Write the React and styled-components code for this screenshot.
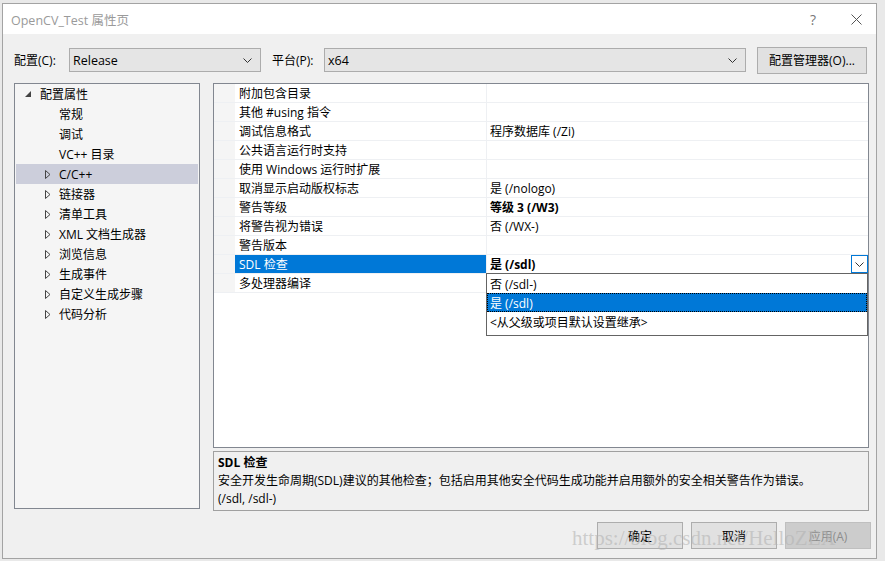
import styled, { createGlobalStyle } from 'styled-components'

const Global = createGlobalStyle`
  html, body {
    margin: 0;
    background: #e9e9e9;
  }
  body {
    font-family: "Segoe UI", "Open Sans", "Noto Sans CJK SC", sans-serif;
    font-size: 12px;
    color: #000;
  }
`

const Page = styled.div`
  height: 561px;
  padding: 3px 0 0 2px;
  box-sizing: border-box;
  overflow: hidden;
`
const Dialog = styled.div`
  position: relative;
  width: 875px;
  height: 556px;
  box-sizing: border-box;
  border: 1px solid #a3a3a3;
  background: #f0f0f0;
  display: flex;
  flex-direction: column;
`
const TitleBar = styled.div`
  height: 30px;
  flex-shrink: 0;
  background: #fff;
  display: flex;
  align-items: center;
  padding-left: 8px;
`
const Title = styled.span`
  color: #9a9a9a;
  font-size: 12.5px;
`
const Controls = styled.div`
  margin-left: auto;
  display: flex;
  align-items: center;
  gap: 35px;
  padding-right: 14px;
  color: #777;
  font-size: 14px;
`
const Body = styled.div`
  padding: 13px 7px 0 11px;
  display: flex;
  flex-direction: column;
`
const ConfigRow = styled.div`
  height: 26px;
  display: flex;
  align-items: center;
`
const Label = styled.span`
  width: ${p => p.$w}px;
  flex-shrink: 0;
`
const Select = styled.div`
  width: ${p => p.$w}px;
  height: 24px;
  box-sizing: border-box;
  border: 1px solid #acacac;
  background: #e5e5e5;
  display: flex;
  align-items: center;
  padding: 0 8px 0 3px;
  margin-right: 11px;
  span { flex: 1; font-size: 12.5px; }
`
const Button = styled.button`
  width: ${p => p.$w || 86}px;
  height: 27px;
  box-sizing: border-box;
  border: 1px solid ${p => (p.disabled ? '#bfbfbf' : '#adadad')};
  background: ${p => (p.disabled ? '#cccccc' : '#e1e1e1')};
  color: ${p => (p.disabled ? '#8d8d8d' : '#000')};
  font-family: inherit;
  font-size: 12px;
  padding: 0;
`
const Main = styled.div`
  margin-top: 10px;
  height: 426px;
  display: flex;
  gap: 13px;
`
const Tree = styled.div`
  width: 186px;
  box-sizing: border-box;
  border: 1px solid #828790;
  background: #f5f5f5;
  padding: 0 1px;
`
const TreeRow = styled.div`
  height: 20px;
  display: flex;
  align-items: center;
  padding-left: ${p => (p.$level ? 29 : 9)}px;
  background: ${p => (p.$selected ? '#cccedb' : 'transparent')};
`
const Arrow = styled.span`
  width: ${p => (p.$level ? 14 : 15)}px;
  flex-shrink: 0;
  display: flex;
  align-items: center;
`
const Right = styled.div`
  flex: 1;
  display: flex;
  flex-direction: column;
  gap: 3px;
`
const Grid = styled.div`
  height: 365px;
  flex-shrink: 0;
  box-sizing: border-box;
  border: 1px solid #828790;
  background: #fff;
`
const Row = styled.div`
  height: 19px;
  box-sizing: border-box;
  display: grid;
  grid-template-columns: 21px 252px 1fr;
  border-bottom: 1px solid #eef0f3;
`
const Gutter = styled.div`
  background: #f5f5f5;
`
const NameCell = styled.div`
  display: flex;
  align-items: center;
  padding-left: 4px;
  border-right: 1px solid #eef0f3;
  background: ${p => (p.$selected ? '#0078d7' : 'transparent')};
  color: ${p => (p.$selected ? '#fff' : '#000')};
`
const ValueCell = styled.div`
  position: relative;
  display: flex;
  align-items: center;
  padding-left: 3px;
  font-weight: ${p => (p.$bold ? 700 : 400)};
`
const DropButton = styled.div`
  margin-left: auto;
  width: 17px;
  height: 18px;
  box-sizing: border-box;
  border: 1px solid #0078d7;
  background: #fff;
  display: flex;
  align-items: center;
  justify-content: center;
`
const Dropdown = styled.div`
  position: absolute;
  top: 18px;
  left: -1px;
  right: 0;
  height: 63px;
  box-sizing: border-box;
  border: 1px solid #646464;
  background: #fff;
  z-index: 2;
  font-weight: 400;
`
const Option = styled.div`
  height: 19px;
  display: flex;
  align-items: center;
  padding-left: 3px;
  background: ${p => (p.$active ? '#0078d7' : 'transparent')};
  color: ${p => (p.$active ? '#fff' : '#000')};
  outline: ${p => (p.$active ? '1px dotted #000' : 'none')};
  outline-offset: -1px;
`
const Desc = styled.div`
  flex: 1;
  box-sizing: border-box;
  border: 1px solid #a0a0a0;
  background: #f0f0f0;
  padding: 2px 4px;
  line-height: 18px;
`
const DescTitle = styled.div`
  font-weight: 700;
`
const Footer = styled.div`
  display: flex;
  justify-content: flex-end;
  gap: 8px;
  padding: 13px 5px 0 0;
`
const Watermark = styled.div`
  position: absolute;
  left: 569px;
  top: 522px;
  font-family: "Liberation Serif", serif;
  font-size: 21px;
  color: rgba(180, 180, 180, 0.6);
  pointer-events: none;
  white-space: nowrap;
`

const Chevron = () => (
  <svg width="9" height="5" viewBox="0 0 9 5">
    <polyline points="0.5,0.5 4.5,4.5 8.5,0.5" fill="none" stroke="#333" strokeWidth="1" />
  </svg>
)

const treeItems = [
  { text: '配置属性', level: 0, open: true },
  { text: '常规', level: 1 },
  { text: '调试', level: 1 },
  { text: 'VC++ 目录', level: 1 },
  { text: 'C/C++', level: 1, arrow: true, selected: true },
  { text: '链接器', level: 1, arrow: true },
  { text: '清单工具', level: 1, arrow: true },
  { text: 'XML 文档生成器', level: 1, arrow: true },
  { text: '浏览信息', level: 1, arrow: true },
  { text: '生成事件', level: 1, arrow: true },
  { text: '自定义生成步骤', level: 1, arrow: true },
  { text: '代码分析', level: 1, arrow: true },
]

const props = [
  ['附加包含目录', ''],
  ['其他 #using 指令', ''],
  ['调试信息格式', '程序数据库 (/Zi)'],
  ['公共语言运行时支持', ''],
  ['使用 Windows 运行时扩展', ''],
  ['取消显示启动版权标志', '是 (/nologo)'],
  ['警告等级', '等级 3 (/W3)', true],
  ['将警告视为错误', '否 (/WX-)'],
  ['警告版本', ''],
  ['SDL 检查', '是 (/sdl)', true, true],
  ['多处理器编译', ''],
]

export default function App() {
  return (
    <Page>
      <Global />
      <Dialog>
        <TitleBar>
          <Title>OpenCV_Test 属性页</Title>
          <Controls>
            <span>?</span>
            <svg width="11" height="11" viewBox="0 0 11 11">
              <path d="M0.5 0.5 L10.5 10.5 M10.5 0.5 L0.5 10.5" stroke="#555" strokeWidth="1" />
            </svg>
          </Controls>
        </TitleBar>
        <Body>
          <ConfigRow>
            <Label $w={55}>配置(C):</Label>
            <Select $w={192}><span>Release</span><Chevron /></Select>
            <Label $w={52}>平台(P):</Label>
            <Select $w={422}><span>x64</span><Chevron /></Select>
            <Button $w={110}>配置管理器(O)...</Button>
          </ConfigRow>
          <Main>
            <Tree>
              {treeItems.map(item => (
                <TreeRow key={item.text} $level={item.level} $selected={item.selected}>
                  <Arrow $level={item.level}>
                    {item.open && (
                      <svg width="6" height="6" viewBox="0 0 6 6">
                        <polygon points="6,0 6,6 0,6" fill="#444" />
                      </svg>
                    )}
                    {item.arrow && (
                      <svg width="6" height="9" viewBox="0 0 6 9">
                        <polygon points="0.5,0.5 5,4.5 0.5,8.5" fill="none" stroke="#444" strokeWidth="1" />
                      </svg>
                    )}
                  </Arrow>
                  {item.text}
                </TreeRow>
              ))}
            </Tree>
            <Right>
              <Grid>
                {props.map(([name, value, bold, selected]) => (
                  <Row key={name}>
                    <Gutter />
                    <NameCell $selected={selected}>{name}</NameCell>
                    <ValueCell $bold={bold}>
                      {value}
                      {selected && (
                        <>
                          <DropButton><Chevron /></DropButton>
                          <Dropdown>
                            <Option>否 (/sdl-)</Option>
                            <Option $active>是 (/sdl)</Option>
                            <Option>&lt;从父级或项目默认设置继承&gt;</Option>
                          </Dropdown>
                        </>
                      )}
                    </ValueCell>
                  </Row>
                ))}
              </Grid>
              <Desc>
                <DescTitle>SDL 检查</DescTitle>
                <div>安全开发生命周期(SDL)建议的其他检查；包括启用其他安全代码生成功能并启用额外的安全相关警告作为错误。</div>
                <div>(/sdl, /sdl-)</div>
              </Desc>
            </Right>
          </Main>
        </Body>
        <Footer>
          <Button>确定</Button>
          <Button>取消</Button>
          <Button disabled>应用(A)</Button>
        </Footer>
        <Watermark>https://blog.csdn.net/HelloZEX</Watermark>
      </Dialog>
    </Page>
  )
}
